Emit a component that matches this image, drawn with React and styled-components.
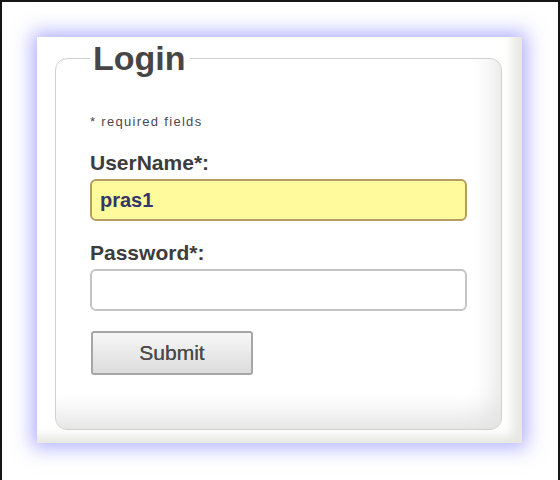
import React from 'react';
import styled, { createGlobalStyle } from 'styled-components';

const GlobalStyle = createGlobalStyle`
  body {
    margin: 0;
    background: #fff;
    font-family: 'Liberation Sans', Arial, sans-serif;
  }
`;

const App = () => {
  return (
    <>
      <GlobalStyle />
      <Frame>
        <Panel>
          <Form onSubmit={(e) => e.preventDefault()}>
            <Legend>Login</Legend>
            <Note>* required fields</Note>
            <Label htmlFor='username'>UserName*:</Label>
            <Input id='username' $filled defaultValue='pras1' />
            <Label htmlFor='password' $gap>Password*:</Label>
            <Input id='password' type='password' />
            <Button type='submit'>Submit</Button>
          </Form>
        </Panel>
      </Frame>
    </>
  );
};

export default App;

const Frame = styled.div`
  box-sizing: border-box;
  width: 560px;
  height: 480px;
  border: 2px solid #151515;
  border-bottom: none;
  padding: 35px 0 0 35px;
  background: #fff;
`;

const Panel = styled.div`
  box-sizing: border-box;
  width: 485px;
  height: 406px;
  padding: 1px 20px 13px 18px;
  background: #fff;
  box-shadow:
    0 0 18px 5px rgba(125, 125, 255, 0.6),
    inset -14px -12px 10px -4px #e9e9e4;
`;

const Form = styled.fieldset`
  box-sizing: border-box;
  height: 100%;
  margin: 0;
  padding: 0 0 0 34px;
  border: 1px solid #d0d0ce;
  border-radius: 12px;
  background: #fff;
  box-shadow: inset -18px -26px 26px -12px rgba(0, 0, 0, 0.11);
`;

const Legend = styled.legend`
  padding: 0 4px 0 3px;
  font-size: 34px;
  line-height: 40px;
  font-weight: bold;
  color: #464646;
`;

const Note = styled.div`
  margin-top: 36px;
  font-size: 13px;
  line-height: 16px;
  letter-spacing: 1.3px;
  color: #4a4a4a;
`;

const Label = styled.label`
  display: block;
  margin-top: ${(p) => (p.$gap ? '20px' : '21px')};
  font-size: 21px;
  line-height: 24px;
  font-weight: bold;
  color: #3c3c3c;
`;

const Input = styled.input`
  display: block;
  box-sizing: border-box;
  width: 377px;
  height: 42px;
  margin-top: 4px;
  padding: 0 8px;
  border: ${(p) => (p.$filled ? '2px solid #b69c62' : '2px solid #c4c4c4')};
  border-radius: 6px;
  background: ${(p) => (p.$filled ? '#fffb9c' : '#fff')};
  font-family: 'Liberation Sans', Arial, sans-serif;
  font-size: 20px;
  font-weight: bold;
  color: #35356a;
  outline: none;
`;

const Button = styled.button`
  display: block;
  box-sizing: border-box;
  width: 162px;
  height: 44px;
  margin-top: 20px;
  margin-left: 1px;
  border: 2px solid #a6a6a6;
  border-radius: 3px;
  background: linear-gradient(to bottom, #f7f7f7, #dcdcdc);
  font-family: 'Liberation Sans', Arial, sans-serif;
  font-size: 21px;
  color: #4a4a4a;
  text-shadow: 0 0 0.4px #4a4a4a;
  cursor: pointer;
`;
